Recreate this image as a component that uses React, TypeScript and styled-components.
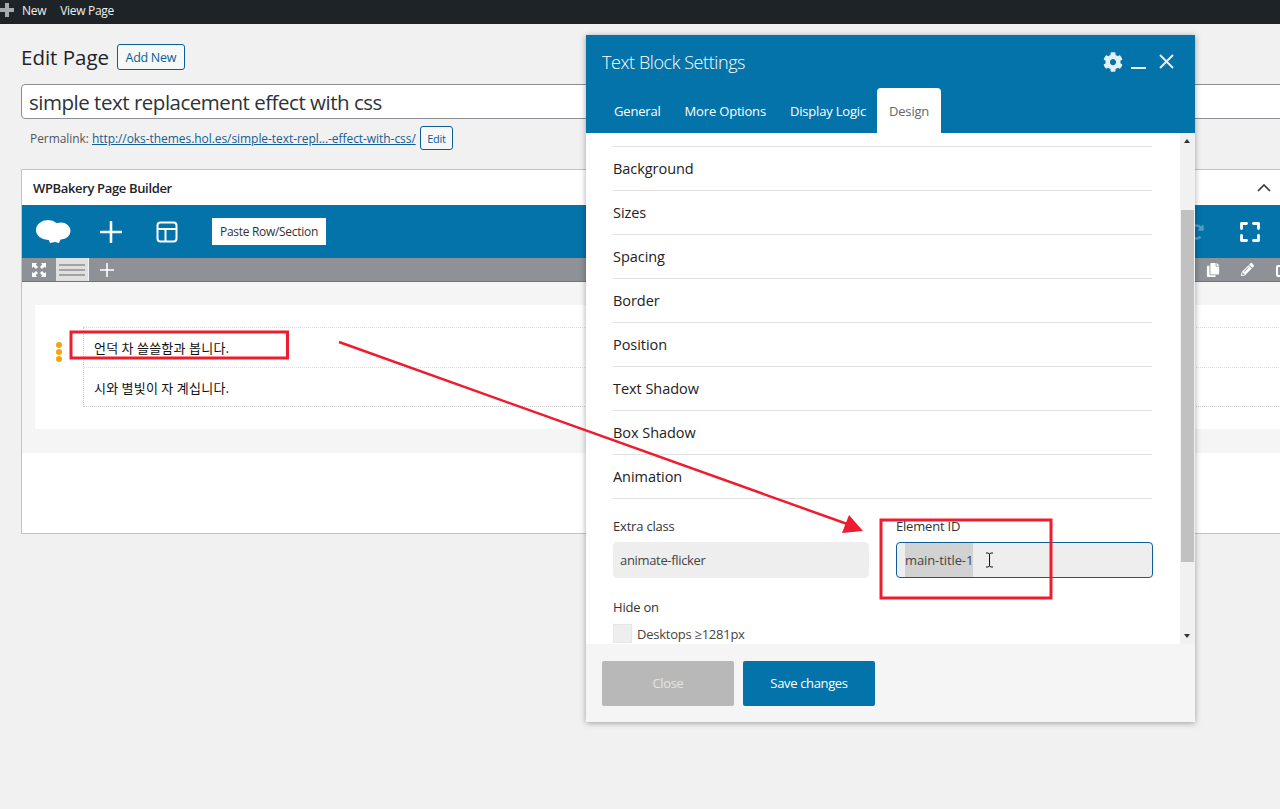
import React from "react";
import styled, { createGlobalStyle } from "styled-components";
import { FaCog, FaCopy, FaPencilAlt, FaRedoAlt } from "react-icons/fa";

const Global = createGlobalStyle`
  html, body { margin: 0; padding: 0; background: #f1f1f1; overflow: hidden; }
  * { box-sizing: border-box; }
  body { font-family: "Open Sans", "Noto Sans CJK KR", sans-serif; color: #1d2327; }
`;

const Page = styled.div`
  position: relative;
  width: 1280px;
  height: 809px;
  overflow: hidden;
  background: #f1f1f1;
`;

const AdminBar = styled.header`
  display: flex;
  align-items: center;
  height: 24px;
  background: #1d2327;
  color: #f0f0f1;
  font-size: 12px;
  letter-spacing: -0.3px;
  padding-bottom: 4px;
`;

const AdminPlus = styled.svg`
  width: 14px;
  height: 14px;
  margin-right: 8px;
  fill: #a7aaad;
`;

const AdminLink = styled.span`
  margin-right: 14px;
`;

const Main = styled.main`
  width: 1320px;
  padding: 20px 0 0 21px;
`;

const HeadingRow = styled.div`
  display: flex;
  align-items: center;
  height: 26px;
`;

const Title = styled.h1`
  margin: 0 8px 0 0;
  font-size: 20.5px;
  font-weight: 400;
  letter-spacing: 0;
  line-height: 26px;
`;

const OutlineButton = styled.span<{ $small?: boolean }>`
  display: inline-flex;
  align-items: center;
  justify-content: center;
  height: ${(p) => (p.$small ? 24 : 26)}px;
  padding: 0 ${(p) => (p.$small ? 6.5 : 7.5)}px;
  border: 1px solid #0a5e94;
  border-radius: 3px;
  background: #f6f7f7;
  color: #0a5e94;
  font-size: ${(p) => (p.$small ? 11 : 12.5)}px;
  letter-spacing: -0.3px;
`;

const TitleInput = styled.div`
  display: flex;
  align-items: center;
  height: 35px;
  margin-top: 14px;
  padding: 0 7px;
  background: #fff;
  border: 1px solid #8c8f94;
  border-radius: 4px;
  font-size: 20.5px;
  letter-spacing: -0.48px;
  color: #2c3338;
`;

const PermalinkRow = styled.div`
  display: flex;
  align-items: center;
  height: 24px;
  margin-top: 7px;
  padding-left: 9px;
  font-size: 12px;
  letter-spacing: -0.06px;
  color: #50575e;
`;

const PermalinkUrl = styled.a`
  margin: 0 4px 0 3px;
  color: #135e96;
  text-decoration: underline;
`;

const Metabox = styled.section`
  margin-top: 19px;
  background: #fff;
  border: 1px solid #c3c4c7;
  height: 365px;
`;

const MetaHeader = styled.div`
  display: flex;
  align-items: center;
  justify-content: space-between;
  height: 35px;
  padding: 0 48px 0 11px;
  font-size: 13px;
  font-weight: 600;
  letter-spacing: -0.35px;
`;

const Toolbar = styled.div`
  display: flex;
  align-items: center;
  height: 53px;
  background: #0473aa;
  padding-left: 14px;
`;

const ToolIcon = styled.svg<{ $gap?: number }>`
  flex: none;
  margin-right: ${(p) => p.$gap ?? 0}px;
`;

const PasteButton = styled.span`
  display: flex;
  align-items: center;
  justify-content: center;
  width: 114px;
  height: 27px;
  background: #fff;
  color: #333;
  font-size: 12px;
  letter-spacing: -0.3px;
`;

const ToolbarRight = styled.div`
  display: flex;
  align-items: center;
  margin-left: auto;
  padding-right: 59px;
  gap: 36px;
  color: #fff;
`;

const FadedRedo = styled(FaRedoAlt)`
  opacity: 0.3;
`;

const SubBar = styled.div`
  display: flex;
  align-items: center;
  height: 24px;
  background: #8e9195;
  border-bottom: 1px solid #6f7276;
  padding-left: 10px;
  color: #fff;
`;

const GripTab = styled.span`
  display: flex;
  flex-direction: column;
  gap: 3px;
  justify-content: center;
  width: 33px;
  height: 23px;
  margin: 0 11px 0 10px;
  padding: 0 3px;
  background: #e0e0e0;
  border-right: 1px solid #f2f2f2;
`;

const GripLine = styled.i`
  display: block;
  height: 2px;
  background: #a3a3a3;
`;

const SubRight = styled.div`
  display: flex;
  align-items: center;
  margin-left: auto;
  padding-right: 30px;
  gap: 21px;
`;

const Canvas = styled.div`
  background: #f5f5f5;
  height: 171px;
  padding: 23px 0 0 13px;
`;

const ElementCard = styled.div`
  display: flex;
  align-items: flex-start;
  height: 124px;
  background: #fff;
  padding: 22px 0 0 21px;
`;

const Handle = styled.div`
  display: flex;
  flex-direction: column;
  gap: 1px;
  padding-top: 15px;
  width: 27px;
`;

const Dot = styled.i`
  display: block;
  width: 6px;
  height: 6px;
  border-radius: 50%;
  background: #f5a40d;
`;

const Rows = styled.div`
  flex: 1;
  border-left: 1px dotted #ccc;
`;

const TextRow = styled.div<{ $last?: boolean }>`
  display: flex;
  align-items: center;
  height: 40px;
  padding-left: 10px;
  font-size: 13px;
  font-weight: 400;
  letter-spacing: 0.25px;
  font-family: "Noto Sans CJK KR", sans-serif;
  color: #111;
  border-top: 1px dotted #ddd;
  border-bottom: ${(p) => (p.$last ? "1px dotted #ccc" : "none")};
`;

const Modal = styled.div`
  position: absolute;
  left: 586px;
  top: 35px;
  display: flex;
  flex-direction: column;
  width: 609px;
  height: 687px;
  background: #fff;
  box-shadow: 0 1px 6px rgba(0, 0, 0, 0.35);
`;

const ModalHead = styled.div`
  height: 98px;
  background: #0473aa;
  color: #fff;
  flex: none;
`;

const ModalTitleRow = styled.div`
  display: flex;
  align-items: center;
  height: 53px;
  padding: 0 20px 0 16px;
`;

const ModalTitle = styled.h2`
  flex: 1;
  margin: 0;
  font-size: 18px;
  font-weight: 300;
  letter-spacing: -0.42px;
`;

const HeadActions = styled.div`
  display: flex;
  align-items: center;
  gap: 8px;
  color: #e3f0f7;
`;

const Minimize = styled.i`
  display: block;
  width: 15px;
  height: 2px;
  margin: 13px 4px 0 0;
  background: #e3f0f7;
`;

const Tabs = styled.nav`
  display: flex;
  height: 45px;
  padding-left: 16px;
`;

const Tab = styled.span<{ $active?: boolean }>`
  display: flex;
  align-items: center;
  padding: 0 12px;
  margin-left: ${(p) => (p.$active ? "-1px" : "0")};
  background: ${(p) => (p.$active ? "#fff" : "transparent")};
  color: ${(p) => (p.$active ? "#666" : "#fff")};
  border-radius: 4px 4px 0 0;
  font-size: 13px;
  letter-spacing: -0.18px;
`;

const ModalBody = styled.div`
  flex: 1;
  position: relative;
  overflow: hidden;
  padding: 13px 43px 0 27px;
`;

const SectionRow = styled.div`
  display: flex;
  align-items: center;
  height: 44px;
  border-top: 1px solid #e0e0e0;
  font-size: 14.5px;
  font-weight: 500;
  letter-spacing: -0.05px;
  color: #222;
  &:nth-child(8) { border-bottom: 1px solid #e0e0e0; height: 45px; }
`;

const FieldGrid = styled.div`
  display: grid;
  grid-template-columns: 256px 257px;
  column-gap: 27px;
  margin-top: 19px;
`;

const FieldLabel = styled.label`
  display: block;
  height: 24px;
  font-size: 13px;
  line-height: 17px;
  letter-spacing: -0.2px;
  color: #333;
`;

const FieldInput = styled.div<{ $focus?: boolean }>`
  display: flex;
  align-items: center;
  height: 36px;
  padding: 0 ${(p) => (p.$focus ? 8 : 6)}px;
  background: #eee;
  border: 1px solid ${(p) => (p.$focus ? "#0a5e94" : "#eee")};
  border-radius: 4px;
  font-size: 13px;
  letter-spacing: -0.33px;
  color: #444;
`;

const Selected = styled.span`
  display: flex;
  align-items: center;
  height: 34px;
  background: #d2d2d2;
  letter-spacing: -0.1px;
`;

const Caret = styled.svg`
  margin-left: 12px;
`;

const HideLabel = styled(FieldLabel)`
  height: 18px;
  margin-top: 21px;
`;

const CheckRow = styled.div`
  display: flex;
  align-items: center;
  margin-top: 7px;
  gap: 5px;
  font-size: 13px;
  letter-spacing: -0.25px;
  color: #444;
`;

const CheckBox = styled.span`
  width: 19px;
  height: 19px;
  background: #eee;
  border: 1px solid #e6e6e6;
`;

const ScrollTrack = styled.div`
  position: absolute;
  top: 0;
  right: 0;
  bottom: 0;
  width: 15px;
  background: #f1f1f1;
`;

const ScrollThumb = styled.div`
  position: absolute;
  top: 77px;
  left: 1px;
  width: 13px;
  height: 352px;
  background: #c1c1c1;
`;

const ScrollArrow = styled.i<{ $down?: boolean }>`
  position: absolute;
  left: 4px;
  ${(p) => (p.$down ? "bottom: 6px;" : "top: 6px;")}
  width: 0;
  height: 0;
  border-left: 3.5px solid transparent;
  border-right: 3.5px solid transparent;
  ${(p) => (p.$down ? "border-top: 4px solid #333;" : "border-bottom: 4px solid #333;")}
`;

const ModalFoot = styled.div`
  display: flex;
  gap: 9px;
  flex: none;
  height: 78px;
  padding: 17px 16px 0;
  background: #f5f5f5;
`;

const FootButton = styled.span<{ $primary?: boolean }>`
  display: flex;
  align-items: center;
  justify-content: center;
  width: 132px;
  height: 45px;
  padding-bottom: 2px;
  border-radius: 2px;
  background: ${(p) => (p.$primary ? "#0473aa" : "#b8b8b8")};
  color: ${(p) => (p.$primary ? "#fff" : "#e4e4e4")};
  font-size: 13px;
  letter-spacing: -0.35px;
`;

const Annotations = styled.svg`
  position: absolute;
  inset: 0;
  width: 1280px;
  height: 809px;
  pointer-events: none;
`;

export default function App() {
  return (
    <Page>
      <Global />
      <AdminBar>
        <AdminPlus viewBox="0 0 14 14"><path d="M5 0h4v5h5v4H9v5H5V9H0V5h5z" /></AdminPlus>
        <AdminLink>New</AdminLink>
        <AdminLink>View Page</AdminLink>
      </AdminBar>
      <Main>
        <HeadingRow>
          <Title>Edit Page</Title>
          <OutlineButton>Add New</OutlineButton>
        </HeadingRow>
        <TitleInput>simple text replacement effect with css</TitleInput>
        <PermalinkRow>
          Permalink:
          <PermalinkUrl>http://oks-themes.hol.es/simple-text-repl...-effect-with-css/</PermalinkUrl>
          <OutlineButton $small>Edit</OutlineButton>
        </PermalinkRow>
        <Metabox>
          <MetaHeader>
            WPBakery Page Builder
            <svg width="14" height="8" viewBox="0 0 14 8" fill="none" stroke="#333" strokeWidth="1.6"><path d="M1 7l6-6 6 6" /></svg>
          </MetaHeader>
          <Toolbar>
            <ToolIcon $gap={29} width="35" height="26" viewBox="0 0 35 26" fill="#fff">
              <ellipse cx="12" cy="11" rx="12" ry="10" />
              <ellipse cx="25" cy="12" rx="9.500" ry="8.500" />
              <path d="M11 17h15l-3 7-4-1-5 1z" />
            </ToolIcon>
            <ToolIcon $gap={34} width="22" height="22" viewBox="0 0 22 22" stroke="#fff" strokeWidth="2.6" fill="none" strokeLinecap="round"><path d="M11 1v20M1 11h20" /></ToolIcon>
            <ToolIcon $gap={34} width="22" height="22" viewBox="0 0 22 22" stroke="#fff" strokeWidth="2" fill="none"><rect x="1.5" y="1.5" width="19" height="19" rx="3" /><path d="M1.5 8h19M9.5 8v12.5" /></ToolIcon>
            <PasteButton>Paste Row/Section</PasteButton>
            <ToolbarRight>
              <FadedRedo size={16} />
              <svg width="20" height="20" viewBox="0 0 20 20" fill="none" stroke="#fff" strokeWidth="2.800" strokeLinecap="round" strokeLinejoin="round"><path d="M1.500 6.500V1.500h5M13.500 1.500h5v5M18.500 13.500v5h-5M6.500 18.500h-5v-5" /></svg>
            </ToolbarRight>
          </Toolbar>
          <SubBar>
            <svg width="14" height="14" viewBox="0 0 14 14" fill="#fff"><path d="M0 0h5L3.800 1.600 6 4 4 6 1.600 3.800 0 5zM14 0v5l-1.600-1.200L10 6 8 4l2.200-2.400L9 0zM0 14V9l1.600 1.200L4 8l2 2-2.400 2.200L5 14zM14 14H9l1.200-1.600L8 10l2-2 2.400 2.200L14 9z" /></svg>
            <GripTab><GripLine /><GripLine /><GripLine /></GripTab>
            <svg width="14" height="14" viewBox="0 0 14 14" stroke="#fff" strokeWidth="1.600"><path d="M7 0v14M0 7h14" /></svg>
            <SubRight>
              <FaCopy size={14} />
              <FaPencilAlt size={13} />
              <svg width="14" height="14" viewBox="0 0 14 14" fill="none" stroke="#fff" strokeWidth="2"><rect x="2" y="3" width="10" height="10" rx="1" /></svg>
            </SubRight>
          </SubBar>
          <Canvas>
            <ElementCard>
              <Handle><Dot /><Dot /><Dot /></Handle>
              <Rows>
                <TextRow>언덕 차 쓸쓸함과 봅니다.</TextRow>
                <TextRow $last>시와 별빛이 자 계십니다.</TextRow>
              </Rows>
            </ElementCard>
          </Canvas>
        </Metabox>
      </Main>
      <Modal>
        <ModalHead>
          <ModalTitleRow>
            <ModalTitle>Text Block Settings</ModalTitle>
            <HeadActions>
              <FaCog size={20} />
              <Minimize />
              <svg width="17" height="17" viewBox="0 0 17 17" stroke="#e3f0f7" strokeWidth="2" fill="none"><path d="M2 2l13 13M15 2L2 15" /></svg>
            </HeadActions>
          </ModalTitleRow>
          <Tabs>
            <Tab>General</Tab>
            <Tab>More Options</Tab>
            <Tab>Display Logic</Tab>
            <Tab $active>Design</Tab>
          </Tabs>
        </ModalHead>
        <ModalBody>
          {["Background", "Sizes", "Spacing", "Border", "Position", "Text Shadow", "Box Shadow", "Animation"].map((s) => (
            <SectionRow key={s}>{s}</SectionRow>
          ))}
          <FieldGrid>
            <div>
              <FieldLabel>Extra class</FieldLabel>
              <FieldInput>animate-flicker</FieldInput>
            </div>
            <div>
              <FieldLabel>Element ID</FieldLabel>
              <FieldInput $focus>
                <Selected>main-title-1</Selected>
                <Caret width="9" height="16" viewBox="0 0 9 16" fill="none" stroke="#111" strokeWidth="1"><path d="M1 1h2l1.500 1 1.500-1h2M4.500 2v12M1 15h2l1.500-1 1.500 1h2" /></Caret>
              </FieldInput>
            </div>
          </FieldGrid>
          <HideLabel>Hide on</HideLabel>
          <CheckRow><CheckBox />Desktops ≥1281px</CheckRow>
          <ScrollTrack>
            <ScrollArrow />
            <ScrollThumb />
            <ScrollArrow $down />
          </ScrollTrack>
        </ModalBody>
        <ModalFoot>
          <FootButton>Close</FootButton>
          <FootButton $primary>Save changes</FootButton>
        </ModalFoot>
      </Modal>
      <Annotations viewBox="0 0 1280 809">
        <rect x="71" y="332" width="216.500" height="26" fill="none" stroke="#ed1c2e" strokeWidth="3" />
        <rect x="881" y="520" width="170" height="78" fill="none" stroke="#ed1c2e" strokeWidth="3" />
        <path d="M339 342L850 525" stroke="#ed1c2e" strokeWidth="2.500" />
        <path d="M863 531L842 533L849 515z" fill="#ed1c2e" />
      </Annotations>
    </Page>
  );
}
